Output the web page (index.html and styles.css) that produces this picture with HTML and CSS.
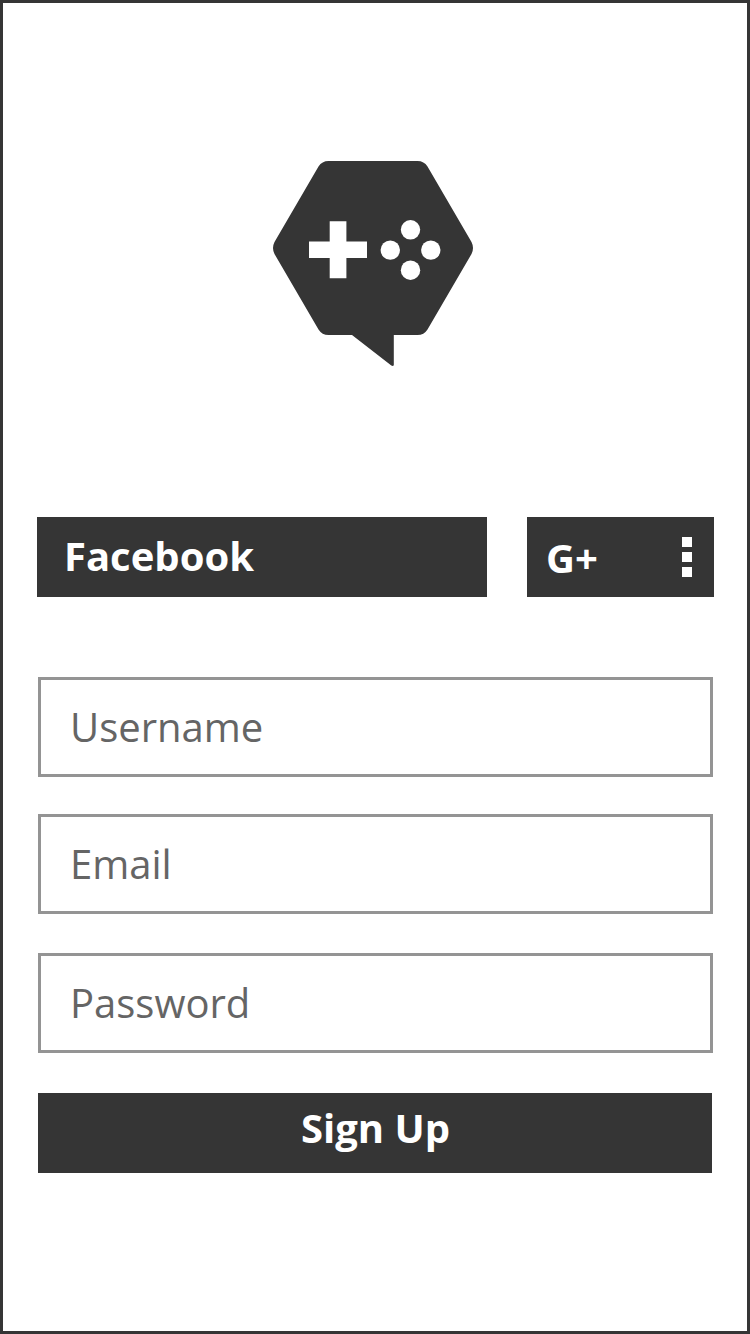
FILE: index.html
```html
<!DOCTYPE html>
<html lang="en">
<head>
<meta charset="utf-8">
<title>Sign Up</title>
<link rel="stylesheet" href="styles.css">
</head>
<body>
<main class="screen">
  <svg class="logo" viewBox="0 0 200 206" aria-hidden="true">
    <path class="logo-shape" d="M55.500 0H144.500Q151 0 154.500 5.500L198.500 81Q201.500 87 198.500 93L154.500 168.500Q151 174 144.500 174H120.800V204Q120.300 205.700 118.300 204.500L79 174H55.500Q49 174 45.500 168.500L1.500 93Q-1.500 87 1.500 81L45.500 5.500Q49 0 55.500 0Z"/>
    <path class="logo-mark" d="M56.700 60.200H73.400V80.500H94V97H73.400V117.300H56.700V97H36V80.500H56.700Z"/>
    <circle class="logo-mark" cx="137.500" cy="68.800" r="9.700"/>
    <circle class="logo-mark" cx="117.300" cy="89.100" r="9.700"/>
    <circle class="logo-mark" cx="157.800" cy="89.100" r="9.700"/>
    <circle class="logo-mark" cx="137.500" cy="109.200" r="9.700"/>
  </svg>
  <div class="social">
    <button class="button facebook" type="button">Facebook</button>
    <button class="button google" type="button">
      <span>G+</span>
      <span class="more"><i class="dot"></i><i class="dot"></i><i class="dot"></i></span>
    </button>
  </div>
  <form class="form">
    <div class="field username">Username</div>
    <div class="field email">Email</div>
    <div class="field password">Password</div>
    <button class="button signup" type="button">Sign Up</button>
  </form>
</main>
</body>
</html>
```
FILE: styles.css
```css
* { box-sizing: border-box; }
body { margin: 0; background: #fff; }
.screen {
  display: flex;
  flex-direction: column;
  width: 750px;
  height: 1334px;
  border: 3px solid #353535;
  padding: 158px 33px 0 34px;
  font-family: "Open Sans", "Noto Sans", sans-serif;
  font-size: 40px;
}
.logo {
  display: block;
  width: 200px;
  height: 206px;
  margin-left: 236px;
}
.logo-shape { fill: #353535; }
.logo-mark { fill: #fff; }
.social {
  display: flex;
  gap: 40px;
  margin-top: 150px;
}
.button {
  display: flex;
  flex-shrink: 0;
  align-items: center;
  height: 80px;
  margin: 0;
  border: 0;
  border-radius: 0;
  background: #353535;
  color: #fff;
  font: bold 40px/54px "Open Sans", "Noto Sans", sans-serif;
}
.facebook { width: 450px; padding: 0 27px 2px; }
.google {
  width: 187px;
  padding: 0 22px 0 19px;
  justify-content: space-between;
}
.google span:first-child { padding-top: 1px; }
.more { display: flex; flex-direction: column; gap: 5px; }
.dot { width: 10px; height: 10px; background: #fff; }
.form {
  display: flex;
  flex-direction: column;
  margin-top: 80px;
  padding: 0 0 0 1px;
}
.field {
  width: 675px;
  height: 100px;
  border: 3px solid #949494;
  padding: 0 29px;
  line-height: 94px;
  color: #656565;
}
.email { margin-top: 37px; }
.password { margin-top: 39px; }
.signup {
  width: 674px;
  margin-top: 40px;
  padding: 0 0 10px 1px;
  justify-content: center;
}
```
